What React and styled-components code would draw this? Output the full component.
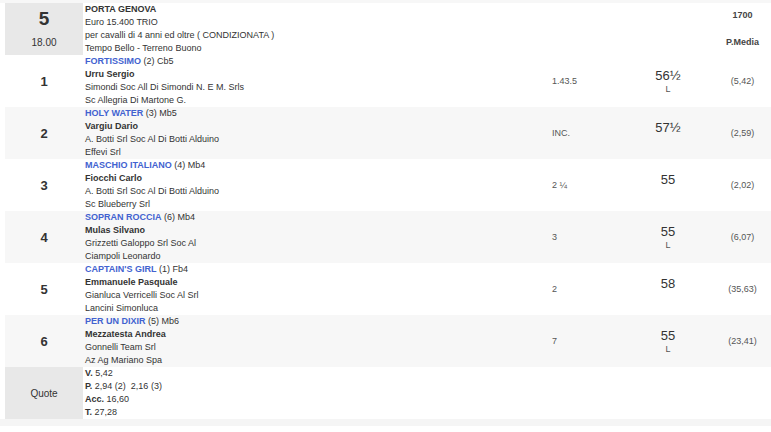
import React from 'react';
import styled, { createGlobalStyle } from 'styled-components';

const GlobalStyle = createGlobalStyle`
  body {
    margin: 0;
    background: #fff;
    font-family: "Liberation Sans", Arial, sans-serif;
    color: #333;
    overflow: hidden;
  }
`;

const Page = styled.div`
  border-top: 3px solid #f7f7f7;
  padding-left: 5px;
`;

const Table = styled.div`
  display: flex;
  flex-direction: column;
  border-bottom: 7px solid #f5f5f5;
  margin-left: -5px;
  padding-left: 5px;
  box-shadow: 0 1px 0 #dedede;
`;

const Row = styled.div`
  display: grid;
  grid-template-columns: 78px 465px 72px 96px 1fr;
  height: 52px;
  background: ${(p) => (p.$striped ? '#f7f7f7' : '#fff')};
  font-size: 9px;
  line-height: 13px;
`;

const NumCell = styled.div`
  display: flex;
  flex-direction: column;
  align-items: center;
  justify-content: center;
  background: ${(p) => (p.$shaded ? '#e8e8e8' : 'transparent')};
  font-weight: bold;
  font-size: 13px;
  color: #333;
`;

const RaceNum = styled.div`
  font-size: 19px;
  line-height: 20px;
  margin-bottom: 2px;
`;

const RaceTime = styled.div`
  font-size: 10px;
  font-weight: normal;
  margin-top: 5px;
`;

const QuoteLabel = styled.span`
  font-size: 10px;
  font-weight: normal;
`;

const InfoCell = styled.div`
  padding-left: 2px;
  display: flex;
  flex-direction: column;
  white-space: nowrap;
`;

const Bold = styled.span`
  font-weight: bold;
`;

const HorseName = styled.span`
  color: #4262d0;
  font-weight: bold;
`;

const TimeCell = styled.div`
  display: flex;
  align-items: center;
  padding-left: 4px;
  color: #555;
`;

const WeightCell = styled.div`
  display: flex;
  flex-direction: column;
  align-items: center;
  justify-content: center;
  padding-top: 2px;
`;

const Weight = styled.div`
  font-size: 13px;
  line-height: 15px;
  color: #333;
`;

const Mark = styled.div`
  font-size: 9px;
  line-height: 13px;
  height: 13px;
  color: #555;
`;

const OddsCell = styled.div`
  display: flex;
  flex-direction: column;
  align-items: center;
  justify-content: center;
  color: #555;
  padding-right: 2px;
`;

const HeadLabel = styled.div`
  font-weight: bold;
  color: #444;
  height: ${(p) => p.$h || 13}px;
`;

const runners = [
  { n: 1, name: 'FORTISSIMO', extra: '(2) Cb5', jockey: 'Urru Sergio', l3: 'Simondi Soc All Di Simondi N. E M. Srls', l4: 'Sc Allegria Di Martone G.', time: '1.43.5', w: '56½', l: true, odds: '(5,42)' },
  { n: 2, name: 'HOLY WATER', extra: '(3) Mb5', jockey: 'Vargiu Dario', l3: 'A. Botti Srl Soc Al Di Botti Alduino', l4: 'Effevi Srl', time: 'INC.', w: '57½', l: false, odds: '(2,59)' },
  { n: 3, name: 'MASCHIO ITALIANO', extra: '(4) Mb4', jockey: 'Fiocchi Carlo', l3: 'A. Botti Srl Soc Al Di Botti Alduino', l4: 'Sc Blueberry Srl', time: '2 ¼', w: '55', l: false, odds: '(2,02)' },
  { n: 4, name: 'SOPRAN ROCCIA', extra: '(6) Mb4', jockey: 'Mulas Silvano', l3: 'Grizzetti Galoppo Srl Soc Al', l4: 'Ciampoli Leonardo', time: '3', w: '55', l: true, odds: '(6,07)' },
  { n: 5, name: "CAPTAIN'S GIRL", extra: '(1) Fb4', jockey: 'Emmanuele Pasquale', l3: 'Gianluca Verricelli Soc Al Srl', l4: 'Lancini Simonluca', time: '2', w: '58', l: false, odds: '(35,63)' },
  { n: 6, name: 'PER UN DIXIR', extra: '(5) Mb6', jockey: 'Mezzatesta Andrea', l3: 'Gonnelli Team Srl', l4: 'Az Ag Mariano Spa', time: '7', w: '55', l: true, odds: '(23,41)' },
];

export default function App() {
  return (
    <Page>
      <GlobalStyle />
      <Table>
        <Row>
          <NumCell $shaded>
            <RaceNum>5</RaceNum>
            <RaceTime>18.00</RaceTime>
          </NumCell>
          <InfoCell>
            <Bold>PORTA GENOVA</Bold>
            <span>Euro 15.400 TRIO</span>
            <span>per cavalli di 4 anni ed oltre ( CONDIZIONATA )</span>
            <span>Tempo Bello - Terreno Buono</span>
          </InfoCell>
          <div />
          <div />
          <OddsCell>
            <HeadLabel $h={27}>1700</HeadLabel>
            <HeadLabel>P.Media</HeadLabel>
          </OddsCell>
        </Row>
        {runners.map((r) => (
          <Row key={r.n} $striped={r.n % 2 === 0}>
            <NumCell>{r.n}</NumCell>
            <InfoCell>
              <span>
                <HorseName>{r.name}</HorseName> {r.extra}
              </span>
              <Bold>{r.jockey}</Bold>
              <span>{r.l3}</span>
              <span>{r.l4}</span>
            </InfoCell>
            <TimeCell>{r.time}</TimeCell>
            <WeightCell>
              <Weight>{r.w}</Weight>
              <Mark>{r.l ? 'L' : ''}</Mark>
            </WeightCell>
            <OddsCell>{r.odds}</OddsCell>
          </Row>
        ))}
        <Row>
          <NumCell $shaded>
            <QuoteLabel>Quote</QuoteLabel>
          </NumCell>
          <InfoCell>
            <span><Bold>V.</Bold> 5,42</span>
            <span><Bold>P.</Bold> 2,94 (2)&nbsp; 2,16 (3)</span>
            <span><Bold>Acc.</Bold> 16,60</span>
            <span><Bold>T.</Bold> 27,28</span>
          </InfoCell>
          <div />
          <div />
          <div />
        </Row>
      </Table>
    </Page>
  );
}
